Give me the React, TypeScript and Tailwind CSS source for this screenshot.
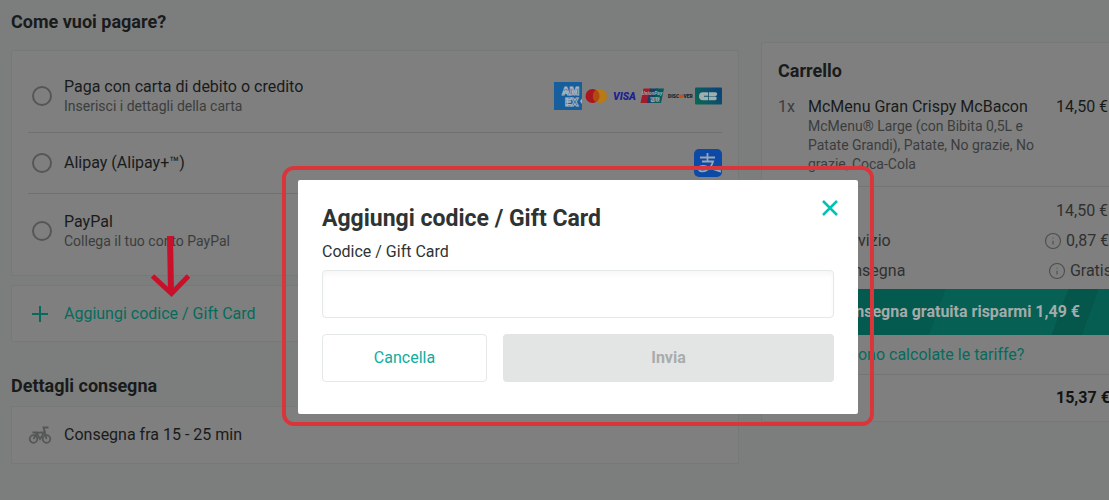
import React, { useState } from "react";
import { Info } from "lucide-react";

const methods = [
  { id: "card", title: "Paga con carta di debito o credito", sub: "Inserisci i dettagli della carta" },
  { id: "alipay", title: "Alipay (Alipay+™)", sub: "" },
  { id: "paypal", title: "PayPal", sub: "Collega il tuo conto PayPal" },
];

function CardLogos() {
  return (
    <div className="flex">
      <svg className="size-7" viewBox="0 0 28 28">
        <rect width="28" height="28" fill="#175e9c" />
        <g fill="#175e9c" stroke="#a9b3bd" strokeWidth="1" fontWeight="900">
          <text x="8" y="13" fontSize="11">AM</text>
          <text x="11" y="23.500" fontSize="11">EX</text>
        </g>
        <path d="M28 16.500 26 19.200l2 2.800z" fill="#a9b3bd" />
      </svg>
      <svg className="size-7" viewBox="0 0 28 28">
        <circle cx="10.500" cy="14" r="7" fill="#a91620" />
        <circle cx="18" cy="14" r="7" fill="#b77a16" />
        <path d="M14.200 8a7 7 0 0 1 0 12 7 7 0 0 1 0-12z" fill="#b04a10" />
      </svg>
      <svg className="size-7" viewBox="0 0 28 28">
        <text x="14.500" y="18" textAnchor="middle" fontSize="10.500" fontWeight="900" fontStyle="italic" fill="#1d2292">
          VISA
        </text>
      </svg>
      <svg className="size-7" viewBox="0 0 28 28">
        <path d="M5.500 6.500H13L10 21H2.500z" fill="#a01b2b" />
        <path d="M12 6.500h8L17 21H9z" fill="#173e66" />
        <path d="M18 6.500h8L23 21h-8z" fill="#07595c" />
        <text x="14" y="13" textAnchor="middle" fontSize="5" fontWeight="700" fontStyle="italic" fill="#a7adad">
          UnionPay
        </text>
        <text x="17" y="19" textAnchor="middle" fontSize="5" fontWeight="700" fill="#a7adad" className="font-['Noto_Sans_CJK_SC',sans-serif]">
          银联
        </text>
      </svg>
      <svg className="size-7" viewBox="0 0 28 28">
        <text x="2" y="16" fontSize="5" fontWeight="900" fill="#1c1c1c">
          DISC
        </text>
        <circle cx="15.500" cy="14.200" r="2" fill="#c0521b" />
        <text x="17.500" y="16" fontSize="5" fontWeight="900" fill="#1c1c1c">
          VER
        </text>
      </svg>
      <svg className="size-7" viewBox="0 0 28 28">
        <defs>
          <linearGradient id="cb" x1="0" x2="1" y1="1" y2="0.500">
            <stop offset="0" stopColor="#086a50" />
            <stop offset="1" stopColor="#0b4578" />
          </linearGradient>
        </defs>
        <rect x="1" y="5.500" width="27" height="17" rx="1" fill="url(#cb)" />
        <path d="M14 10.200H9a4 4 0 0 0 0 8h5v-3.500h-4v-1h4zM14.800 10.200h6.500a1.900 1.900 0 0 1 0 3.800h-6.500zM14.800 14.500h6.500a1.900 1.900 0 0 1 0 3.700h-6.500z" fill="#a3adad" />
      </svg>
    </div>
  );
}

function AlipayLogo() {
  return (
    <svg className="size-7" viewBox="0 0 28 28">
      <rect width="28" height="28" rx="5" fill="#0c4aa6" />
      <g fill="none" stroke="#9aa5b5" strokeWidth="1.800">
        <path d="M6 8.500h15M13.500 4v8M8 12.500h11c-1 4-3 6.500-6 8.500-3.500 2-8 2-8.300-1-.2-3 4.300-4 8-2.500 3.500 1.200 8 3.500 14.300 5" />
      </g>
    </svg>
  );
}

function Bike() {
  return (
    <svg className="w-6 h-5" viewBox="0 0 24 20" fill="none" stroke="#555757" strokeWidth="1.800">
      <circle cx="5.500" cy="14" r="3.800" />
      <circle cx="18.500" cy="14" r="3.800" />
      <path d="M5.500 14 9 8l7.500-1L12 14 8.500 8M18.500 14 15.500 2.500h5M4.500 7.500h6" />
    </svg>
  );
}

function App() {
  const [method, setMethod] = useState("");
  const [code, setCode] = useState("");

  return (
    <div className="relative min-h-screen overflow-hidden bg-[#7c7d7d] font-['Roboto','Liberation_Sans',sans-serif] text-base text-[#191b1b]">
      <div className="flex items-start gap-[22px] pl-[11px] -mr-5 pb-9">
        <main className="flex-1 min-w-0 pt-2">
          <h2 className="text-lg leading-7 font-bold">Come vuoi pagare?</h2>
          <div className="mt-[14px] border border-[#777878] rounded-xs bg-[#7f7f7f] px-4 py-2">
            {methods.map((m) => (
              <label
                key={m.id}
                htmlFor={m.id}
                className={`flex items-center border-[#6f7070] ${m.sub ? "h-[73px]" : "h-[62px] border-y"} `}
              >
                <span className="w-6 mr-3 flex justify-end">
                  <input
                    id={m.id}
                    type="radio"
                    name="method"
                    checked={method == m.id}
                    onChange={() => setMethod(m.id)}
                    className="appearance-none size-5 rounded-full border-2 border-[#555757] checked:border-[6px] checked:border-[#066b5f]"
                  />
                </span>
                <span className="flex-1">
                  <span className="block leading-5">{m.title}</span>
                  {m.sub && <span className="block text-sm leading-[18px] text-[#3b3d3d]">{m.sub}</span>}
                </span>
                {m.id == "card" && <CardLogos />}
                {m.id == "alipay" && <AlipayLogo />}
              </label>
            ))}
          </div>

          <div className="relative mt-[9px] border border-[#777878] rounded-xs bg-[#7f7f7f]">
            <button className="flex items-center w-full h-[55px] px-4 text-[#066b5c]">
              <span className="w-6 mr-3 flex justify-center">
                <svg className="size-4" viewBox="0 0 16 16" stroke="currentColor" strokeWidth="2">
                  <path d="M8 0v16M0 8h16" />
                </svg>
              </span>
              Aggiungi codice / Gift Card
            </button>
            {/* red pointer over the gift card row */}
            <svg className="absolute left-[138px] -top-[50px] w-10 h-[62px] z-10" viewBox="0 0 40 62" fill="none" stroke="#c8102a">
              <path d="M20 0l1 56" strokeWidth="6" />
              <path d="M2.500 40 21.500 57.500 38.500 40" strokeWidth="5" />
            </svg>
          </div>

          <h2 className="mt-[30px] text-lg leading-7 font-bold">Dettagli consegna</h2>
          <div className="mt-[6px] flex items-center h-[58px] px-4 border border-[#777878] rounded-xs bg-[#7f7f7f]">
            <span className="w-6 mr-3 flex justify-center">
              <Bike />
            </span>
            Consegna fra 15 - 25 min
          </div>
        </main>

        <aside className="w-[368px] shrink-0 mt-[42px] border border-[#777878] rounded-xs bg-[#7f7f7f]">
          <div className="px-4 pt-[14px] pb-3 border-b border-[#747575]">
            <h2 className="text-lg leading-7 font-bold">Carrello</h2>
            <div className="flex mt-3 leading-5">
              <span className="w-[30px] text-[#3b3d3d]">1x</span>
              <div className="flex-1 pr-4">
                <p>McMenu Gran Crispy McBacon</p>
                <p className="text-sm leading-[19px] text-[#3b3d3d]">
                  McMenu® Large (con Bibita 0,5L e Patate Grandi), Patate, No grazie, No grazie, Coca-Cola
                </p>
              </div>
              <span className="w-14 whitespace-nowrap">14,50 €</span>
            </div>
          </div>
          <div className="px-4 pt-[9px] pb-[3px] leading-[30px] text-[#2f3131]">
            <div className="flex justify-between">
              <span>Subtotale</span>
              <span className="w-14 whitespace-nowrap">14,50 €</span>
            </div>
            <div className="flex items-center">
              <span className="flex-1">Costi di servizio</span>
              <Info className="size-[18px] mr-1 text-[#4c4e4e]" strokeWidth={1.5} />
              <span className="w-[46px] whitespace-nowrap">0,87 €</span>
            </div>
            <div className="flex items-center">
              <span className="flex-1">Costi di consegna</span>
              <Info className="size-[18px] mr-1 text-[#4c4e4e]" strokeWidth={1.5} />
              <span>Gratis</span>
            </div>
          </div>
          <div className="h-[46px] flex items-center justify-end pr-12 font-bold text-[#a3abab] bg-[linear-gradient(110deg,#055a4f_0%,#055a4f_48%,#066054_48%,#066054_80%,#05564b_80%,#05564b_88%,#065e53_88%)]">
            Con la consegna gratuita risparmi 1,49 €
          </div>
          <div className="h-10 px-4 flex items-center border-b border-[#747575]">
            <a href="#tariffe" className="text-[#066b5c]">
              Come vengono calcolate le tariffe?
            </a>
          </div>
          <div className="h-[46px] px-4 flex items-center justify-between font-bold text-[#121414]">
            <span>Totale</span>
            <span className="w-14 whitespace-nowrap">15,37 €</span>
          </div>
        </aside>
      </div>

      <div className="fixed inset-0 z-20 flex items-center justify-center pl-[47px] pt-[92px]">
        <div className="w-[592px] border-4 border-[#d8363b] rounded-xl px-3 pt-[10px] pb-2">
          <form
            role="dialog"
            onSubmit={(e) => {
              e.preventDefault();
            }}
            className="relative rounded-xs bg-white px-6 pt-[25px] pb-8 text-[#2e3333]"
          >
            <button type="button" aria-label="Chiudi" className="absolute top-4 right-4 size-6 flex items-center justify-center">
              <svg className="size-4" viewBox="0 0 16 16" stroke="#00c2b3" strokeWidth="2.500">
                <path d="M1 1l14 14M15 1L1 15" />
              </svg>
            </button>
            <h1 className="text-[23px] leading-7 font-bold">Aggiungi codice / Gift Card</h1>
            <label htmlFor="code" className="block mt-2 mb-[7px] leading-[22px]">
              Codice / Gift Card
            </label>
            <input
              id="code"
              type="text"
              value={code}
              onChange={(e) => setCode(e.currentTarget.value)}
              className="block w-full h-12 px-4 rounded-sm border border-[#e5e8e8] outline-none shadow-[inset_0_4px_4px_#f8f8f8]"
            />
            <div className="flex gap-4 mt-4">
              <button type="button" className="flex-1 h-12 rounded-sm border border-[#e5e8e8] text-[#10ad9f]">
                Cancella
              </button>
              <button type="submit" disabled={code == ""} className="w-[331px] h-12 rounded-sm bg-[#e2e5e4] font-bold text-[#a9acac]">
                Invia
              </button>
            </div>
          </form>
        </div>
      </div>
    </div>
  );
}

export default App;
